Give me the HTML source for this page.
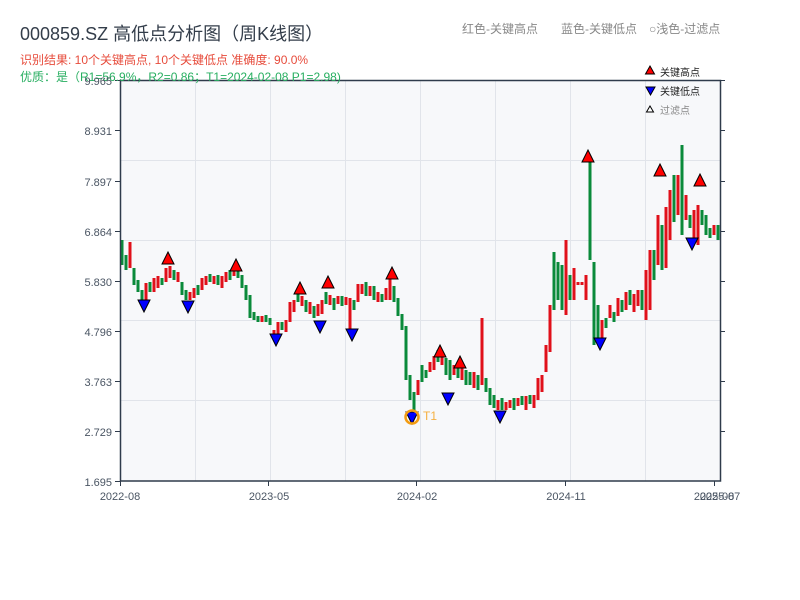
<!DOCTYPE html>
<html><head><meta charset="utf-8">
<style>
body{margin:0;background:#fff;width:800px;height:600px;overflow:hidden;font-family:"Liberation Sans","Noto Sans CJK SC",sans-serif;}
svg{position:absolute;left:0;top:0}
</style></head><body>
<svg width="800" height="600" xmlns="http://www.w3.org/2000/svg" font-family="Liberation Sans, Noto Sans CJK SC, sans-serif">
<rect x="120" y="80" width="600" height="401" fill="#f7f8fa"/>
<g stroke="#e1e4ea" stroke-width="1">
<line x1="195.5" y1="80" x2="195.5" y2="481"/><line x1="270.5" y1="80" x2="270.5" y2="481"/><line x1="345.5" y1="80" x2="345.5" y2="481"/><line x1="420.5" y1="80" x2="420.5" y2="481"/><line x1="495.5" y1="80" x2="495.5" y2="481"/><line x1="570.5" y1="80" x2="570.5" y2="481"/><line x1="645.5" y1="80" x2="645.5" y2="481"/>
<line x1="120" y1="160.5" x2="720" y2="160.5"/><line x1="120" y1="240.5" x2="720" y2="240.5"/><line x1="120" y1="320.5" x2="720" y2="320.5"/><line x1="120" y1="400.5" x2="720" y2="400.5"/>
</g>
<path stroke="#0a8a3a" stroke-width="3" fill="none" d="M122 240V265M126 255V270M134 268V285M138 280V292M142 290V302M150 282V292M162 278V285M174 270V280M182 282V295M186 290V300M198 285V295M210 274V282M218 275V285M230 270V280M238 268V278M242 275V288M246 285V300M250 295V318M254 312V320M258 316V322M266 315V322M270 318V325M282 322V330M298 290V302M306 300V312M314 306V318M326 292V304M334 298V310M342 296V306M354 300V310M366 282V296M374 286V300M382 294V302M394 286V302M398 298V316M402 314V330M406 326V380M410 375V400M414 392V412M422 365V382M426 370V378M438 350V362M446 358V375M450 360V380M458 365V378M466 370V385M470 372V385M478 375V390M486 378V392M490 388V405M494 395V408M502 398V410M514 398V410M522 396V405M530 395V404M554 252V310M558 262V300M562 265V310M570 275V300M590 160V260M594 262V345M598 305V340M606 318V328M614 312V322M622 300V312M630 290V305M642 290V310M654 250V280M662 225V270M674 175V222M682 145V235M690 215V228M702 210V225M706 215V235M710 228V238M718 225V240"/>
<path stroke="#e0101a" stroke-width="3" fill="none" d="M130 242V268M146 283V300M154 278V292M158 276V288M166 268V282M170 266V278M178 272V282M190 292V300M194 288V298M202 278V290M206 276V285M214 276V284M222 276V288M226 272V282M234 266V276M262 316V322M274 330V340M278 322V335M286 320V332M290 302V322M294 300V312M302 296V306M310 302V314M318 304V316M322 300V314M330 295V305M338 296V304M346 297V305M350 298V330M358 284V302M362 284V294M370 286V296M378 292V302M386 288V300M390 276V300M418 380V395M430 362V372M434 356V370M442 355V365M454 365V375M462 368V380M474 372V388M482 318V385M498 400V410M506 402V410M510 400V408M518 398V406M526 396V410M534 395V408M538 378V400M542 375V392M546 345V372M550 305V352M566 240V315M574 268V300M578 282V285M582 282V285M586 275V300M602 320V340M610 305V318M618 298V316M626 292V310M634 294V312M638 290V306M646 270V320M650 250V310M658 215V265M666 207V268M670 190V240M678 175V215M686 195V220M694 210V240M698 205V245M714 225V235"/>
<g stroke="#2f3b4b" stroke-width="1.5" fill="none">
<rect x="120.5" y="80.5" width="600" height="400.5"/>
</g>
<g stroke="#2f3b4b" stroke-width="1">
<line x1="115" y1="80.5" x2="120" y2="80.5"/><line x1="115" y1="130.5" x2="120" y2="130.5"/><line x1="115" y1="181.5" x2="120" y2="181.5"/><line x1="115" y1="231.5" x2="120" y2="231.5"/><line x1="115" y1="281.5" x2="120" y2="281.5"/><line x1="115" y1="331.5" x2="120" y2="331.5"/><line x1="115" y1="381.5" x2="120" y2="381.5"/><line x1="115" y1="431.5" x2="120" y2="431.5"/><line x1="115" y1="481.5" x2="120" y2="481.5"/>
<line x1="720" y1="80.5" x2="725" y2="80.5"/><line x1="720" y1="130.5" x2="725" y2="130.5"/><line x1="720" y1="181.5" x2="725" y2="181.5"/><line x1="720" y1="231.5" x2="725" y2="231.5"/><line x1="720" y1="281.5" x2="725" y2="281.5"/><line x1="720" y1="331.5" x2="725" y2="331.5"/><line x1="720" y1="381.5" x2="725" y2="381.5"/><line x1="720" y1="431.5" x2="725" y2="431.5"/>
<line x1="120.5" y1="481" x2="120.5" y2="486"/><line x1="268.5" y1="481" x2="268.5" y2="486"/><line x1="416.5" y1="481" x2="416.5" y2="486"/><line x1="565.5" y1="481" x2="565.5" y2="486"/><line x1="714.5" y1="481" x2="714.5" y2="486"/>
</g>
<g font-size="11" fill="#4a5563" text-anchor="end">
<text x="112" y="135">8.931</text><text x="112" y="186">7.897</text><text x="112" y="236">6.864</text><text x="112" y="286">5.830</text><text x="112" y="336">4.796</text><text x="112" y="386">3.763</text><text x="112" y="436">2.729</text><text x="112" y="486">1.695</text>
</g>
<g font-size="11" fill="#4a5563" text-anchor="middle">
<text x="120" y="500">2022-08</text><text x="269" y="500">2023-05</text><text x="417" y="500">2024-02</text><text x="566" y="500">2024-11</text><text x="714" y="500">2025-08</text><text x="720" y="500">2025-07</text>
</g>
<g stroke="#000" stroke-width="1" fill="#f00">
<polygon points="168,252 174,264 162,264"/><polygon points="236,259 242,271 230,271"/><polygon points="300,282 306,294 294,294"/><polygon points="328,276 334,288 322,288"/><polygon points="392,267 398,279 386,279"/><polygon points="440,345 446,357 434,357"/><polygon points="460,356 466,368 454,368"/><polygon points="588,150 594,162 582,162"/><polygon points="660,164 666,176 654,176"/><polygon points="700,174 706,186 694,186"/>
</g>
<g stroke="#000" stroke-width="1" fill="#00f">
<polygon points="138,300 150,300 144,312"/><polygon points="182,301 194,301 188,313"/><polygon points="270,334 282,334 276,346"/><polygon points="314,321 326,321 320,333"/><polygon points="346,329 358,329 352,341"/><polygon points="406,412 418,412 412,424"/><polygon points="442,393 454,393 448,405"/><polygon points="494,411 506,411 500,423"/><polygon points="594,338 606,338 600,350"/><polygon points="686,238 698,238 692,250"/>
</g>
<circle cx="412" cy="417" r="6.5" fill="none" stroke="#f39c12" stroke-width="2.5"/>
<text x="423" y="420" font-size="12" fill="#f5b041">T1</text>
<text x="20" y="40" font-size="18" fill="#333d4a">000859.SZ 高低点分析图（周K线图）</text>
<text x="20" y="64" font-size="12" fill="#e74c3c">识别结果: 10个关键高点, 10个关键低点   准确度: 90.0%</text>
<text x="20" y="81" font-size="12" fill="#27ae60">优质：是（R1=56.9%，R2=0.86；T1=2024-02-08 P1=2.98)</text>
<text x="112" y="85" font-size="11" fill="#4a5563" text-anchor="end">9.965</text>
<g font-size="12" fill="#888">
<text x="462" y="33">红色-关键高点</text><text x="561" y="33">蓝色-关键低点</text><text x="649" y="33">○浅色-过滤点</text>
</g>
<polygon points="650,66 654.5,74 645.5,74" fill="#f00" stroke="#000"/>
<polygon points="646,87 655,87 650.5,95" fill="#00f" stroke="#000"/>
<polygon points="650,106 653.5,112 646.5,112" fill="#fff" stroke="#000"/>
<g font-size="10">
<text x="660" y="76" fill="#222">关键高点</text><text x="660" y="95" fill="#222">关键低点</text><text x="660" y="114" fill="#888">过滤点</text>
</g>
</svg>
</body></html>
